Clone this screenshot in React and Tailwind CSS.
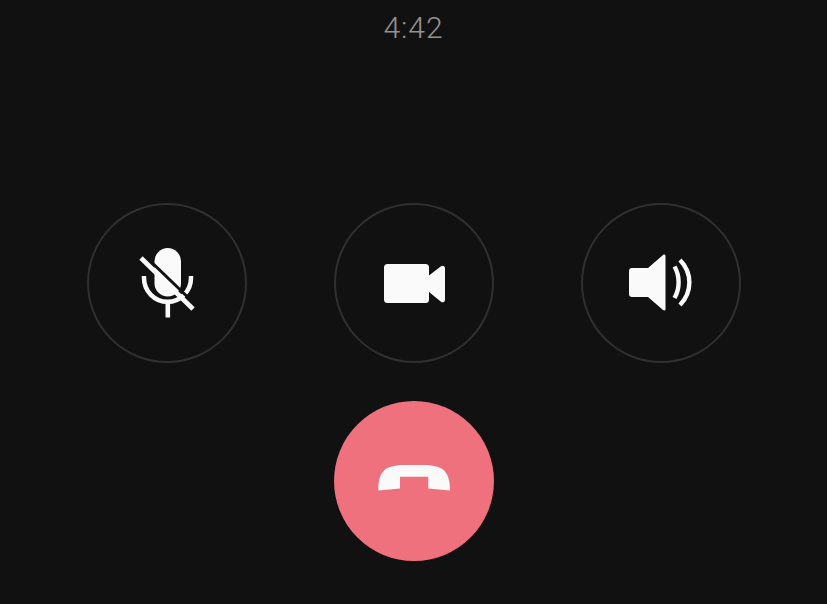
const MicOff = () => (
  <svg viewBox="0 0 160 160" className="w-full h-full">
    <path d="M57 73v2a23.500 23.800 0 0 0 47 0v-2" fill="none" stroke="#fafafa" strokeWidth="4.500" />
    <path d="M80.800 99v15.500" fill="none" stroke="#fafafa" strokeWidth="4.600" />
    <rect x="67.500" y="45" width="26.500" height="48.500" rx="13.250" fill="#fafafa" />
    <path d="M57 52l54 52" fill="none" stroke="#111111" strokeWidth="3" />
    <path d="M54 55l52 51" fill="none" stroke="#fafafa" strokeWidth="4.600" />
  </svg>
);

const Video = () => (
  <svg viewBox="0 0 160 160" className="w-full h-full">
    <rect x="50" y="61" width="45" height="39" rx="3.500" fill="#fafafa" />
    <path d="M95 72.500l12-9.300c1.600-1.200 4-.4 4 2v31.600c0 2.400-2.400 3.200-4 2l-12-9.800z" fill="#fafafa" />
  </svg>
);

const Speaker = () => (
  <svg viewBox="0 0 160 160" className="w-full h-full">
    <path d="M51 65h16l15-13c1-.9 2.500-.5 2.500 1v53c0 1.500-1.500 1.900-2.500 1l-15-13H51a3 3 0 0 1-3-3V68a3 3 0 0 1 3-3z" fill="#fafafa" />
    <path d="M93.500 63.500c5.500 9.500 5.500 22 0 31.500" fill="none" stroke="#fafafa" strokeWidth="4.400" />
    <path d="M99 57c12.500 13 12.500 32 0 45" fill="none" stroke="#fafafa" strokeWidth="4.400" />
  </svg>
);

const HangUp = () => (
  <svg viewBox="0 0 160 160" className="w-full h-full">
    <path d="M44.300 89.500C44.300 79 46 73 51 68.500 55 65.500 62 64 70 64h20c8 0 15 1.500 19 4.500 5 4.500 7 10.500 7 21l-21.700-2V75.700H66v11.800z" fill="#fafafa" />
  </svg>
);

const controls = [MicOff, Video, Speaker];

export default function App() {
  return (
    <div className="w-full h-screen overflow-hidden bg-[#111111] flex flex-col items-center">
      <div className="mt-[10px] h-9 leading-9 text-[30px] tracking-[1px] font-light text-[#939393] font-['Roboto','Liberation_Sans',sans-serif]">
        4:42
      </div>

      <div className="mt-[157px] flex gap-[87px]">
        {controls.map((Icon, i) => (
          <button key={i} className="w-40 h-40 rounded-full border-2 border-[#303030] box-border relative">
            <span className="absolute -inset-[2px] block">
              <Icon />
            </span>
          </button>
        ))}
      </div>

      <button className="mt-[38px] w-40 h-40 rounded-full bg-[#ef717e]">
        <HangUp />
      </button>
    </div>
  );
}
